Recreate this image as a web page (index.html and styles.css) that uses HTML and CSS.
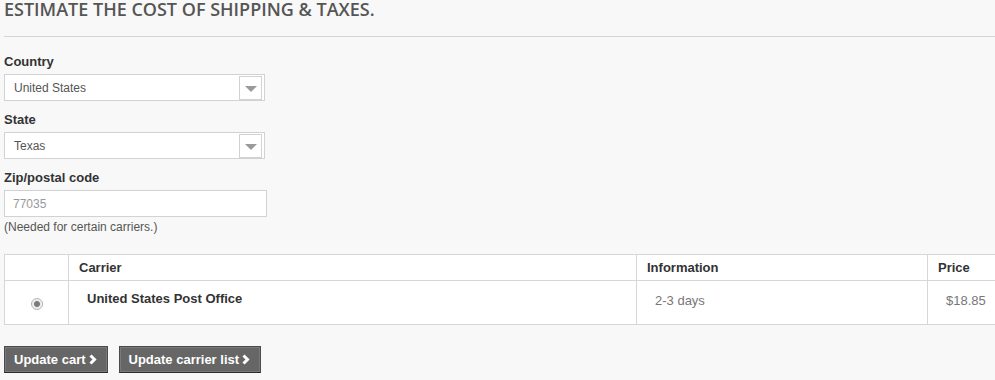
FILE: index.html
```html
<!DOCTYPE html>
<html>
<head>
  <title>Shipping estimate</title>
  <link rel="stylesheet" href="styles.css">
</head>
<body>
  <div class="estimate">
    <h2 class="estimate-title">Estimate the cost of shipping &amp; taxes.</h2>

    <form class="estimate-form">
      <label for="country">Country</label>
      <div class="select-box">
        <span class="select-value">United States</span>
        <span class="select-arrow"></span>
      </div>

      <label for="state">State</label>
      <div class="select-box">
        <span class="select-value">Texas</span>
        <span class="select-arrow"></span>
      </div>

      <label for="zip">Zip/postal code</label>
      <input type="text" id="zip" class="text-input" value="77035">
      <p class="note">(Needed for certain carriers.)</p>
    </form>

    <table class="carriers">
      <tr>
        <th class="col-radio"></th>
        <th class="col-carrier">Carrier</th>
        <th class="col-info">Information</th>
        <th class="col-price">Price</th>
      </tr>
      <tr>
        <td class="col-radio"><input type="radio" name="carrier" checked></td>
        <td class="col-carrier carrier-name">United States Post Office</td>
        <td class="col-info">2-3 days</td>
        <td class="col-price">$18.85</td>
      </tr>
    </table>

    <div class="actions">
      <button class="btn">Update cart <svg class="chevron" viewBox="0 0 8 10" width="8" height="11"><path d="M1.5 1 L5.5 5 L1.5 9" fill="none" stroke="#fff" stroke-width="3"/></svg></button>
      <button class="btn">Update carrier list <svg class="chevron" viewBox="0 0 8 10" width="8" height="11"><path d="M1.5 1 L5.5 5 L1.5 9" fill="none" stroke="#fff" stroke-width="3"/></svg></button>
    </div>
  </div>
</body>
</html>
```

FILE: styles.css
```css
html, body {
  margin: 0;
  background-color: #f8f8f8;
  overflow: hidden;
}

body {
  font-family: "Liberation Sans", Arial, sans-serif;
  font-size: 13px;
  color: #333;
}

.estimate {
  padding-left: 4px;
  width: 1100px;
}

.estimate-title {
  margin: 0;
  font-family: "Open Sans", sans-serif;
  font-weight: 600;
  font-size: 18px;
  line-height: 18px;
  text-transform: uppercase;
  color: #555;
  padding-bottom: 18px;
  border-bottom: 1px solid #d4d4d4;
}

.estimate-form {
  display: flex;
  flex-direction: column;
  align-items: flex-start;
  padding-top: 16px;
}

.estimate-form label {
  display: block;
  font-weight: bold;
  line-height: 18px;
  margin-bottom: 3px;
}

.select-box {
  display: flex;
  align-items: center;
  justify-content: space-between;
  box-sizing: border-box;
  width: 261px;
  height: 27px;
  background-color: #fff;
  border: 1px solid #d2d2d2;
  padding: 1px 2px 1px 9px;
  margin-bottom: 10px;
  color: #555;
  font-size: 12px;
}

.select-arrow {
  position: relative;
  box-sizing: border-box;
  width: 23px;
  height: 24px;
  border: 1px solid #d2d2d2;
  background-color: #fff;
}

.select-arrow::after {
  content: "";
  position: absolute;
  left: 5px;
  top: 9px;
  border-left: 6px solid transparent;
  border-right: 6px solid transparent;
  border-top: 6px solid #9a9a9a;
}

.text-input {
  box-sizing: border-box;
  width: 263px;
  height: 27px;
  margin: 0;
  border: 1px solid #d2d2d2;
  background-color: #fff;
  padding: 0 8px;
  font-family: "Liberation Sans", Arial, sans-serif;
  font-size: 12px;
  color: #999;
  outline: none;
}

.note {
  margin: 2px 0 0;
  line-height: 16px;
  font-size: 12px;
  color: #555;
}

.carriers {
  margin-top: 19px;
  border-collapse: collapse;
  background-color: #fff;
  table-layout: fixed;
  width: 1030px;
}

.carriers th, .carriers td {
  box-sizing: border-box;
  border: 1px solid #d6d6d6;
  text-align: left;
}

.carriers th {
  height: 26px;
  padding: 0 10px;
  font-weight: bold;
  color: #333;
}

.carriers td {
  height: 44px;
  padding: 0 18px 4px;
  color: #777;
  vertical-align: middle;
}

.carriers .col-radio {
  width: 64px;
  padding: 0;
  text-align: center;
}

.carriers .col-carrier {
  width: 568px;
}

.carriers .col-info {
  width: 291px;
}

.carriers td.carrier-name {
  color: #333;
  font-weight: bold;
  padding-bottom: 8px;
}

.carriers input[type="radio"] {
  appearance: none;
  margin: 0;
  width: 12px;
  height: 12px;
  border: 1px solid #b5b5b5;
  border-radius: 50%;
  background: radial-gradient(circle, #7a7a7a 0, #7a7a7a 2.5px, #ececec 3.5px, #f4f4f4 100%);
  vertical-align: middle;
}

.actions {
  display: flex;
  gap: 11px;
  margin-top: 21px;
}

.btn {
  display: flex;
  align-items: center;
  gap: 3px;
  height: 27px;
  box-sizing: border-box;
  padding: 0 10px 0 9px;
  border: 1px solid #4a4a4a;
  border-bottom-color: #2e2e2e;
  box-shadow: inset 0 0 0 1px #7a7a7a;
  background-color: #666;
  color: #fff;
  font-family: "Liberation Sans", Arial, sans-serif;
  font-size: 13px;
  font-weight: bold;
  cursor: pointer;
}

.chevron {
  display: block;
}
```
